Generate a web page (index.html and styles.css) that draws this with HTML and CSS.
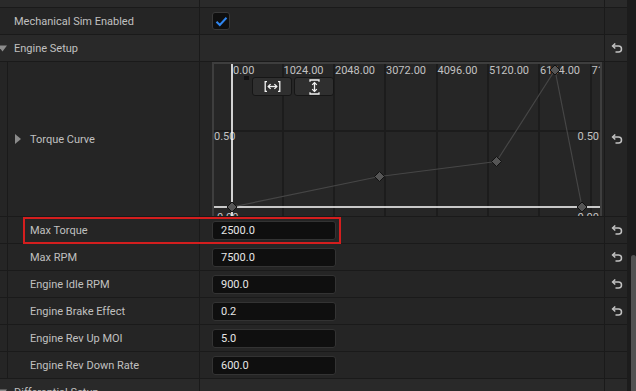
FILE: index.html
```html
<!DOCTYPE html>
<html>
<head>
<meta charset="utf-8">
<link rel="stylesheet" href="styles.css">
</head>
<body>
<div class="panel">
  <div class="list">
    <div class="row stub"><div class="name"></div><div class="value"></div><div class="reset"></div></div>

    <div class="row">
      <div class="name pad"><span class="label">Mechanical Sim Enabled</span></div>
      <div class="value"><span class="check"><svg width="13" height="11" viewBox="0 0 13 11"><path d="M1.5 5.8 L4.8 9 L11.5 1.8" fill="none" stroke="#2f86f0" stroke-width="2"/></svg></span></div>
      <div class="reset"></div>
    </div>

    <div class="row cat">
      <div class="name"><svg class="tri-down" width="7" height="7" viewBox="0 0 7 7"><polygon points="-2,0.5 7,0.5 2.5,6.5" fill="#8c8c8c"/></svg><span class="label">Engine Setup</span></div>
      <div class="value"></div>
      <div class="reset"><svg class="undo" width="12" height="10" viewBox="0 0 12 10"><path d="M1.8 3 H7.5 A3 3 0 0 1 7.5 9 H4.5" fill="none" stroke="#c2c2c2" stroke-width="1.5"/><path d="M4.3 0.5 L1.6 3 L4.3 5.5" fill="none" stroke="#c2c2c2" stroke-width="1.5"/></svg></div>
    </div>

    <div class="row nested curve-row">
      <div class="name"><span class="gutter"></span><svg class="tri-right" width="6" height="10" viewBox="0 0 6 10"><polygon points="0,0 6,5 0,10" fill="#8c8c8c"/></svg><span class="label">Torque Curve</span></div>
      <div class="value curve-cell">
        <div class="curve">
          <svg class="graph" width="386" height="152" viewBox="214 64 386 152">
            <g stroke="#1c1c1c" stroke-width="2">
              <line x1="283" y1="64" x2="283" y2="216"/>
              <line x1="334" y1="64" x2="334" y2="216"/>
              <line x1="385" y1="64" x2="385" y2="216"/>
              <line x1="437" y1="64" x2="437" y2="216"/>
              <line x1="488" y1="64" x2="488" y2="216"/>
              <line x1="539" y1="64" x2="539" y2="216"/>
              <line x1="591" y1="64" x2="591" y2="216"/>
              <line x1="214" y1="131" x2="600" y2="131"/>
            </g>
            <g class="axis-text" fill="#c2c2c2">
              <text x="233" y="74">0.00</text>
              <text x="283.5" y="74">1024.00</text>
              <text x="335" y="74">2048.00</text>
              <text x="386" y="74">3072.00</text>
              <text x="437.5" y="74">4096.00</text>
              <text x="489" y="74">5120.00</text>
              <text x="540" y="74">6144.00</text>
              <text x="591.5" y="74">7168.00</text>
              <text x="214" y="140">0.50</text>
              <text x="599" y="140" text-anchor="end">0.50</text>
              <text x="214" y="221">-0.00</text>
              <text x="599" y="221" text-anchor="end">-0.00</text>
            </g>
            <rect x="244" y="76" width="5" height="4" fill="#121212"/>
            <line x1="232" y1="64" x2="232" y2="216" stroke="#ffffff" stroke-width="1.6"/>
            <line x1="214" y1="207" x2="600" y2="207" stroke="#ffffff" stroke-width="1.6"/>
            <polyline points="232,207 379.5,176.5 496.5,161.5 555,70 582,207" fill="none" stroke="#464646" stroke-width="1.2"/>
            <g fill="#555555" stroke="#111111" stroke-width="1">
              <polygon points="232,202 237,207 232,212 227,207"/>
              <polygon points="379.5,171.5 384.5,176.5 379.5,181.5 374.5,176.5"/>
              <polygon points="496.5,156.5 501.5,161.5 496.5,166.5 491.5,161.5"/>
              <polygon points="555,65 560,70 555,75 550,70"/>
              <polygon points="582,202 587,207 582,212 577,207"/>
            </g>
          </svg>
          <div class="zoom-btns">
            <span class="zbtn"><svg width="17" height="11" viewBox="0 0 17 11"><g fill="none" stroke="#f2f2f2" stroke-width="1.3"><path d="M3 0.7 H1.2 V10.3 H3"/><path d="M14 0.7 H15.8 V10.3 H14"/><path d="M4.2 5.5 H12.8"/><path d="M6.6 3.1 L4.2 5.5 L6.6 7.9"/><path d="M10.4 3.1 L12.8 5.5 L10.4 7.9"/></g></svg></span>
            <span class="zbtn"><svg width="11" height="16" viewBox="0 0 11 16"><g fill="none" stroke="#f2f2f2" stroke-width="1.3"><path d="M1 2.8 V1 H10 V2.8"/><path d="M1 13.2 V15 H10 V13.2"/><path d="M5.5 3.6 V12.4"/><path d="M3.2 5.9 L5.5 3.6 L7.8 5.9"/><path d="M3.2 10.1 L5.5 12.4 L7.8 10.1"/></g></svg></span>
          </div>
        </div>
      </div>
      <div class="reset"><svg class="undo" width="12" height="10" viewBox="0 0 12 10"><path d="M1.8 3 H7.5 A3 3 0 0 1 7.5 9 H4.5" fill="none" stroke="#c2c2c2" stroke-width="1.5"/><path d="M4.3 0.5 L1.6 3 L4.3 5.5" fill="none" stroke="#c2c2c2" stroke-width="1.5"/></svg></div>
    </div>

    <div class="row nested highlighted">
      <div class="name"><span class="gutter"></span><span class="label child">Max Torque</span></div>
      <div class="value"><span class="input">2500.0</span></div>
      <div class="reset"><svg class="undo" width="12" height="10" viewBox="0 0 12 10"><path d="M1.8 3 H7.5 A3 3 0 0 1 7.5 9 H4.5" fill="none" stroke="#c2c2c2" stroke-width="1.5"/><path d="M4.3 0.5 L1.6 3 L4.3 5.5" fill="none" stroke="#c2c2c2" stroke-width="1.5"/></svg></div>
      <div class="redbox"></div>
    </div>

    <div class="row nested">
      <div class="name"><span class="gutter"></span><span class="label child">Max RPM</span></div>
      <div class="value"><span class="input">7500.0</span></div>
      <div class="reset"><svg class="undo" width="12" height="10" viewBox="0 0 12 10"><path d="M1.8 3 H7.5 A3 3 0 0 1 7.5 9 H4.5" fill="none" stroke="#c2c2c2" stroke-width="1.5"/><path d="M4.3 0.5 L1.6 3 L4.3 5.5" fill="none" stroke="#c2c2c2" stroke-width="1.5"/></svg></div>
    </div>

    <div class="row nested">
      <div class="name"><span class="gutter"></span><span class="label child">Engine Idle RPM</span></div>
      <div class="value"><span class="input">900.0</span></div>
      <div class="reset"><svg class="undo" width="12" height="10" viewBox="0 0 12 10"><path d="M1.8 3 H7.5 A3 3 0 0 1 7.5 9 H4.5" fill="none" stroke="#c2c2c2" stroke-width="1.5"/><path d="M4.3 0.5 L1.6 3 L4.3 5.5" fill="none" stroke="#c2c2c2" stroke-width="1.5"/></svg></div>
    </div>

    <div class="row nested">
      <div class="name"><span class="gutter"></span><span class="label child">Engine Brake Effect</span></div>
      <div class="value"><span class="input">0.2</span></div>
      <div class="reset"><svg class="undo" width="12" height="10" viewBox="0 0 12 10"><path d="M1.8 3 H7.5 A3 3 0 0 1 7.5 9 H4.5" fill="none" stroke="#c2c2c2" stroke-width="1.5"/><path d="M4.3 0.5 L1.6 3 L4.3 5.5" fill="none" stroke="#c2c2c2" stroke-width="1.5"/></svg></div>
    </div>

    <div class="row nested">
      <div class="name"><span class="gutter"></span><span class="label child">Engine Rev Up MOI</span></div>
      <div class="value"><span class="input">5.0</span></div>
      <div class="reset"></div>
    </div>

    <div class="row nested">
      <div class="name"><span class="gutter"></span><span class="label child">Engine Rev Down Rate</span></div>
      <div class="value"><span class="input">600.0</span></div>
      <div class="reset"></div>
    </div>

    <div class="row cat">
      <div class="name"><svg class="tri-down" width="7" height="7" viewBox="0 0 7 7"><polygon points="-2,0.5 7,0.5 2.5,6.5" fill="#8c8c8c"/></svg><span class="label">Differential Setup</span></div>
      <div class="value"></div>
      <div class="reset"></div>
    </div>
  </div>
  <div class="scrollbar"><div class="thumb"></div></div>
</div>
</body>
</html>
```

FILE: styles.css
```css
* { box-sizing: border-box; }
html, body {
  margin: 0;
  padding: 0;
  width: 636px;
  height: 391px;
  overflow: hidden;
  background: #1c1c1c;
  font-family: Roboto, "Noto Sans", "Liberation Sans", sans-serif;
}
.panel {
  display: flex;
  width: 636px;
  height: 391px;
}
.list {
  width: 627px;
  display: flex;
  flex-direction: column;
  overflow: hidden;
}
.row {
  position: relative;
  display: flex;
  flex: none;
  height: 27px;
  background: #252525;
  border-bottom: 1px solid #1a1a1a;
}
.row.stub {
  height: 8px;
  background: #2a2a2a;
}
.row.cat {
  background: #292929;
}
.name {
  width: 200px;
  flex: none;
  display: flex;
  align-items: center;
  border-right: 1px solid #1a1a1a;
  overflow: hidden;
}
.name.pad { padding-left: 14px; }
.value {
  flex: 1;
  display: flex;
  align-items: center;
  padding-left: 12px;
  border-right: 1px solid #1a1a1a;
}
.reset {
  width: 22px;
  flex: none;
  display: flex;
  align-items: center;
  justify-content: center;
}
.undo { display: block; margin-left: 1px; }
.label {
  font-size: 11px;
  color: #c0c0c0;
  white-space: nowrap;
}
.tri-down {
  flex: none;
  margin-right: 7px;
}
.gutter {
  align-self: stretch;
  width: 8px;
  flex: none;
  border-right: 1px solid #1a1a1a;
}
.label.child { margin-left: 22px; }
.tri-right {
  flex: none;
  margin-left: 7px;
  margin-right: 9px;
}
.check {
  width: 18px;
  height: 18px;
  display: flex;
  align-items: center;
  justify-content: center;
  background: #0f0f0f;
  border: 1px solid #393939;
  border-radius: 3px;
}
.check svg { display: block; }
.input {
  width: 124px;
  height: 19px;
  display: flex;
  align-items: center;
  padding-left: 8px;
  background: #0f0f0f;
  border: 1px solid #333333;
  border-radius: 3px;
  font-size: 11px;
  color: #e6e6e6;
}
.row.curve-row {
  height: 155px;
}
.curve-cell {
  align-items: flex-start;
  padding-right: 2px;
}
.curve {
  position: relative;
  width: 390px;
  height: 154px;
  border: 2px solid #3e3e3e;
  border-bottom: none;
  background: #262626;
  overflow: hidden;
}
.graph {
  display: block;
}
.axis-text {
  font-family: Roboto, "Noto Sans", sans-serif;
  font-size: 11px;
}
.zoom-btns {
  position: absolute;
  left: 38px;
  top: 13px;
  display: flex;
  gap: 2px;
}
.zbtn {
  width: 40px;
  height: 19px;
  display: flex;
  align-items: center;
  justify-content: center;
  background: #2f2f2f;
  border: 1px solid #161616;
  border-radius: 3px;
}
.zbtn svg { display: block; }
.redbox {
  position: absolute;
  left: 23px;
  top: 0;
  width: 318px;
  height: 27px;
  border: 2px solid #d41e1e;
  pointer-events: none;
}
.scrollbar {
  width: 9px;
  flex: none;
  background: #1c1c1c;
  padding-top: 255px;
  padding-left: 4px;
}
.thumb {
  width: 5px;
  height: 200px;
  background: #525252;
  border-radius: 3px 3px 0 0;
}
```
